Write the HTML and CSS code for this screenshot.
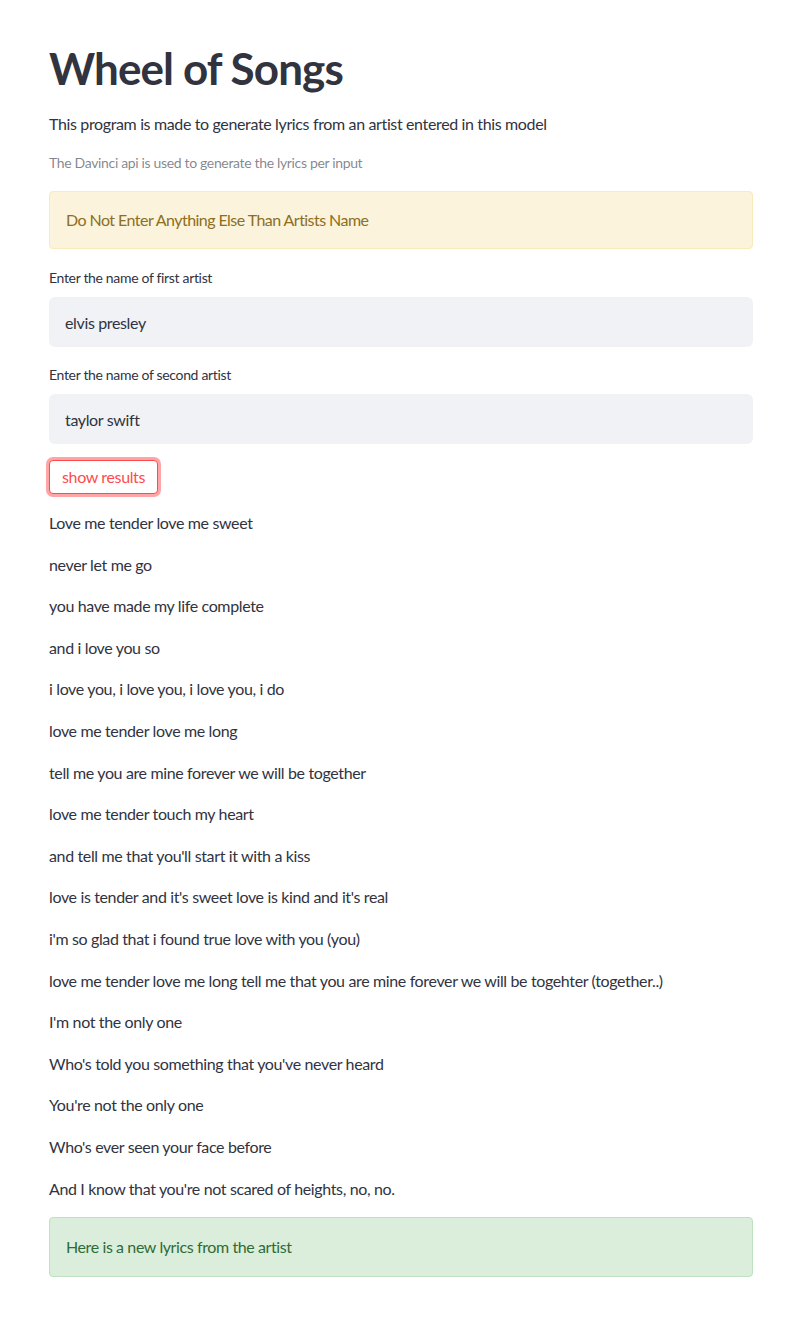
FILE: index.html
```html
<!DOCTYPE html>
<html lang="en">
<head>
<meta charset="utf-8">
<title>Wheel of Songs</title>
<link rel="stylesheet" href="styles.css">
</head>
<body>
<main class="main">
  <h1 class="title">Wheel of Songs</h1>
  <p class="intro">This program is made to generate lyrics from an artist entered in this model</p>
  <p class="caption">The Davinci api is used to generate the lyrics per input</p>
  <div class="alert alert-warning">Do Not Enter Anything Else Than Artists Name</div>

  <label class="field">
    <span class="field-label">Enter the name of first artist</span>
    <input class="field-input" type="text" value="elvis presley">
  </label>

  <label class="field field-second">
    <span class="field-label">Enter the name of second artist</span>
    <input class="field-input" type="text" value="taylor swift">
  </label>

  <div class="button-row">
    <button class="btn" type="button">show results</button>
  </div>

  <div class="lyrics">
    <p>Love me tender love me sweet</p>
    <p>never let me go</p>
    <p>you have made my life complete</p>
    <p>and i love you so</p>
    <p>i love you, i love you, i love you, i do</p>
    <p>love me tender love me long</p>
    <p>tell me you are mine forever we will be together</p>
    <p>love me tender touch my heart</p>
    <p>and tell me that you'll start it with a kiss</p>
    <p>love is tender and it's sweet love is kind and it's real</p>
    <p>i'm so glad that i found true love with you (you)</p>
    <p>love me tender love me long tell me that you are mine forever we will be togehter (together..)</p>
    <p>I'm not the only one</p>
    <p>Who's told you something that you've never heard</p>
    <p>You're not the only one</p>
    <p>Who's ever seen your face before</p>
    <p>And I know that you're not scared of heights, no, no.</p>
  </div>

  <div class="alert alert-success">Here is a new lyrics from the artist</div>
</main>
</body>
</html>
```

FILE: styles.css
```css
* { box-sizing: border-box; }

html, body {
  margin: 0;
  padding: 0;
  background: #ffffff;
}

body {
  font-family: "Lato", "Open Sans", "Liberation Sans", sans-serif;
  color: #31333f;
  font-size: 16px;
  letter-spacing: -0.36px;
}

.main {
  width: 704px;
  margin-left: 49px;
  padding-top: 42px;
  padding-bottom: 54px;
}

.title {
  margin: 0;
  font-size: 44px;
  line-height: 52px;
  font-weight: 700;
  letter-spacing: -0.9px;
  color: #31333f;
}

.intro {
  margin: 17px 0 0;
  line-height: 25.6px;
}

.caption {
  margin: 15px 0 0;
  font-size: 14px;
  line-height: 22.4px;
  color: rgba(49, 51, 63, 0.6);
  letter-spacing: -0.34px;
}

.alert {
  border-radius: 4px;
  border: 1px solid transparent;
  padding: 15px 16px;
  line-height: 26px;
}

.alert-warning {
  margin-top: 17px;
  background: #fbf3db;
  border-color: #f8ebb9;
  color: #8d6e22;
  letter-spacing: -0.55px;
}

.alert-success {
  margin-top: 1px;
  background: #dbeedb;
  border-color: #bfe1bf;
  color: #2f6b37;
  height: 60px;
  padding-top: 16px;
  letter-spacing: -0.4px;
}

.field {
  display: flex;
  flex-direction: column;
  margin-top: 19px;
}

.field-second {
  margin-top: 18px;
}

.field-label {
  font-size: 14px;
  line-height: 20px;
  margin-bottom: 9px;
  letter-spacing: -0.33px;
}

.field-input {
  height: 50px;
  border: none;
  border-radius: 6px;
  background: #f0f2f6;
  font: inherit;
  letter-spacing: -0.36px;
  color: #31333f;
  padding: 0 16px;
  outline: none;
}

.button-row {
  margin-top: 16px;
  display: flex;
}

.btn {
  font: inherit;
  font-size: 16px;
  letter-spacing: -0.36px;
  line-height: 24px;
  padding: 4px 12px;
  background: #ffffff;
  color: #ff4b4b;
  border: 1px solid #ff4b4b;
  border-radius: 4px;
  box-shadow: 0 0 0 3px rgba(255, 75, 75, 0.5);
  cursor: pointer;
}

.lyrics {
  margin-top: 16px;
}

.lyrics p {
  margin: 0 0 16px;
  line-height: 25.6px;
}
```
